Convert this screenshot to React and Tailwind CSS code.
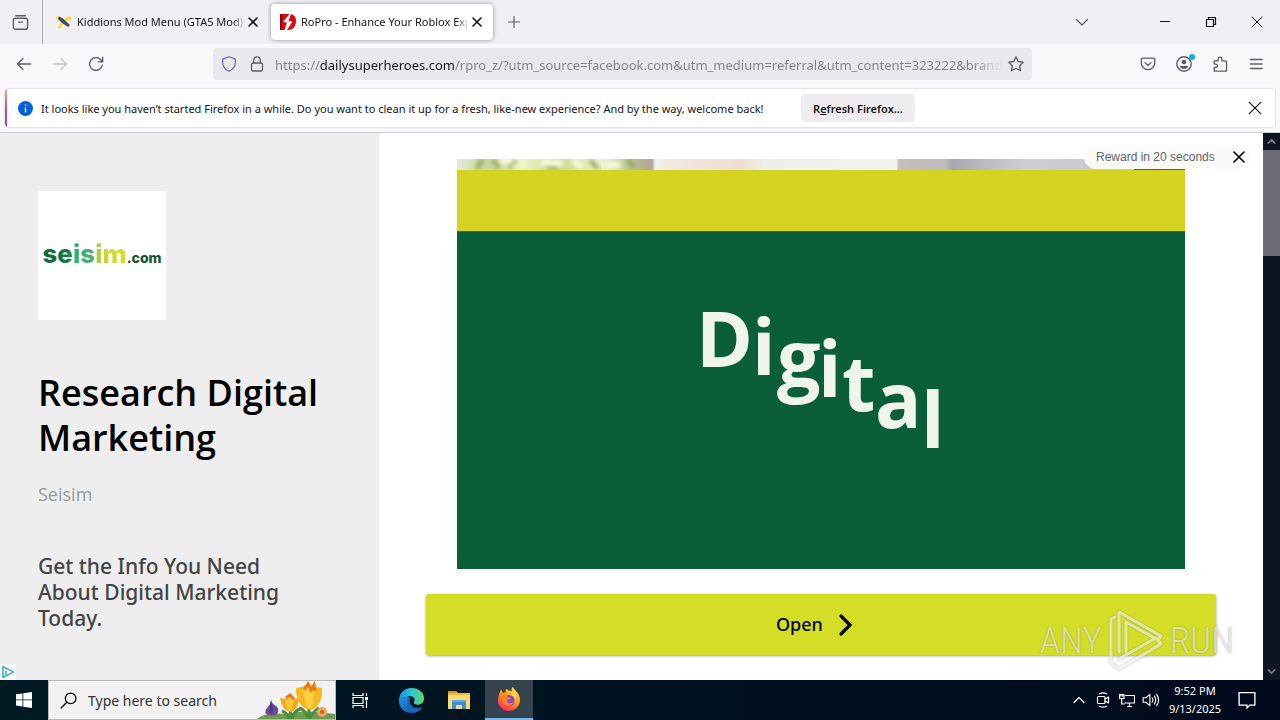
import React from "react";

const ui = "font-['Noto_Sans','Open_Sans',sans-serif]";

function Svg({ size = 16, children, className = "", ...rest }) {
  return (
    <svg
      width={size}
      height={size}
      viewBox="0 0 16 16"
      fill="none"
      stroke="currentColor"
      strokeWidth="1.2"
      strokeLinecap="round"
      strokeLinejoin="round"
      aria-hidden="true"
      className={`shrink-0 ${className}`}
      {...rest}
    >
      {children}
    </svg>
  );
}

function IconButton({ label, className = "", children }) {
  return (
    <button type="button" aria-label={label} className={`flex shrink-0 items-center justify-center ${className}`}>
      {children}
    </button>
  );
}

function Cross({ size = 16, inset = 3, width = 1.2 }) {
  const far = 16 - inset;
  return (
    <Svg size={size} strokeWidth={width}>
      <path d={`M${inset} ${inset}L${far} ${far}M${far} ${inset}L${inset} ${far}`} />
    </Svg>
  );
}

function Tab({ icon, title, active }) {
  return (
    <div
      role="tab"
      aria-selected={active}
      className={
        active
          ? "flex h-9 w-[222px] items-center gap-1 rounded-sm bg-white pl-[9px] pr-2 shadow-[0_0_4px_rgba(0,0,0,0.4)]"
          : "flex h-9 w-[222px] items-center gap-1 pl-[9px] pr-2"
      }
    >
      {icon}
      <span className="min-w-0 flex-1 overflow-hidden whitespace-nowrap pl-px pt-px [mask-image:linear-gradient(to_left,transparent,black_12px)]">
        {title}
      </span>
      <IconButton label={`Close ${title}`} className="-ml-1 h-4 w-4">
        <Cross inset={4} width={1.6} />
      </IconButton>
    </div>
  );
}

function KiddionsIcon() {
  return (
    <svg width="16" height="16" viewBox="0 0 16 16" aria-hidden="true" className="shrink-0">
      <path d="M0 3l3-1 3 2 1 2-3 1-3-1zM9 4l3-1.500 4 .5-1 3-3 .5-3 1zM4 9l3 1-2 4-2 1-1-2z" fill="#f2e23c" />
      <path d="M3 2.500l4 2 7 6.500-2 2-6-4-4-4z" fill="#444b59" />
    </svg>
  );
}

function RoProIcon() {
  return (
    <svg width="16" height="16" viewBox="0 0 16 16" aria-hidden="true" className="shrink-0">
      <path d="M0 1q0-1 1-1h8c5 0 7 3 7 7 0 5-3 9-8 9H1q-1 0-1-1z" fill="#d9070f" />
      <path d="M0 1v14q0 1 1 1h1V0H1Q0 0 0 1z" fill="#7f0b10" />
      <path d="M9.500 0L3 8l4 .5L4.500 16H7l5.500-8.500-4-.5L11 .2z" fill="#fff" />
    </svg>
  );
}

function TabStrip() {
  return (
    <div className="flex h-11 shrink-0 items-center bg-[#f0f0f4] text-[#15141a]">
      <IconButton label="Firefox View" className="h-full w-[43px] border-r border-[#a9a9ae] pr-[2px] text-[#5b5b66]">
        <Svg size={17} strokeWidth="1.3">
          <path d="M3.5 1.6h9" />
          <rect x="1.3" y="4" width="13.4" height="10.4" rx="2" />
          <path d="M6.2 7.6h3.6" />
        </Svg>
      </IconButton>
      <div role="tablist" className="flex gap-[2px] pl-1 text-[11px]">
        <Tab icon={<KiddionsIcon />} title="Kiddions Mod Menu (GTA5 Mod)" />
        <Tab icon={<RoProIcon />} title="RoPro - Enhance Your Roblox Experience" active />
      </div>
      <IconButton label="New tab" className="ml-[13px] h-4 w-4 text-[#5b5b66]">
        <Svg>
          <path d="M8 2.5v11M2.5 8h11" />
        </Svg>
      </IconButton>
      <IconButton label="List all tabs" className="ml-auto mr-11 h-8 w-8 text-[#5b5b66]">
        <Svg>
          <path d="M2.5 5.5L8 11l5.500-5.500" />
        </Svg>
      </IconButton>
      <IconButton label="Minimize" className="h-full w-[46px]">
        <Svg strokeWidth="1">
          <path d="M3 7.500h10" strokeLinecap="butt" />
        </Svg>
      </IconButton>
      <IconButton label="Restore" className="h-full w-[46px]">
        <Svg strokeWidth="1.200" strokeLinejoin="miter">
          <path d="M3.500 5.500h7v7h-7zM5.500 5.500v-2h7v7h-2" />
        </Svg>
      </IconButton>
      <IconButton label="Close" className="h-full w-[46px]">
        <Cross width={1} />
      </IconButton>
    </div>
  );
}

function NavBar() {
  return (
    <div className="flex h-11 shrink-0 items-center bg-[#f9f9fb] pl-4 pr-4 pb-1 text-[#5b5b66]">
      <div className="flex gap-5">
        <IconButton label="Back" className="h-4 w-4">
          <Svg strokeWidth="1.3">
            <path d="M14.500 8h-13M7 2.500L1.500 8 7 13.500" />
          </Svg>
        </IconButton>
        <IconButton label="Forward" className="h-4 w-4 text-[#c2c2c8]">
          <Svg strokeWidth="1.3">
            <path d="M1.500 8h13M9 2.500L14.500 8 9 13.500" />
          </Svg>
        </IconButton>
        <IconButton label="Reload" className="h-4 w-4">
          <Svg strokeWidth="1.3">
            <path d="M14.300 9A6.400 6.400 0 1 1 12.700 3.700L14.500 5.600M14.700 1.200v4.600h-4.600" />
          </Svg>
        </IconButton>
      </div>
      <div className="ml-[109px] flex h-8 min-w-0 flex-1 items-center rounded bg-[#e9e9ed] px-2">
        <IconButton label="Tracking protection" className="h-4 w-4 text-[#6562c9]">
          <Svg>
            <path d="M8 .8l6.300 2.300v3.500c0 4-2.500 7-6.300 8.700C4.200 13.600 1.700 10.600 1.700 6.600V3.100z" />
          </Svg>
        </IconButton>
        <IconButton label="Connection secure" className="ml-3 h-4 w-4">
          <Svg strokeWidth="1.3">
            <rect x="2.500" y="7" width="11" height="8" rx="1.500" />
            <path d="M4.800 7V4a3.200 3.200 0 0 1 6.400 0v3" />
          </Svg>
        </IconButton>
        <input
          aria-label="Address"
          readOnly
          value="https://dailysuperheroes.com/rpro_z/?utm_source=facebook.com&utm_medium=referral&utm_content=323222&brand=ropro"
          className="ml-[10px] mr-[6px] min-w-0 flex-1 bg-[linear-gradient(to_right,#808087_45px,#15141a_45px,#15141a_180px,#808087_180px,#808087_calc(100%-30px),transparent)] bg-clip-text pt-[3px] text-[13px] text-transparent outline-none"
        />
        <IconButton label="Bookmark this page" className="h-4 w-4">
          <Svg strokeWidth="1.3">
            <path d="M8 .9l2.200 4.600 5 .7-3.600 3.500.9 5L8 12.300l-4.500 2.400.9-5L.8 6.200l5-.7z" />
          </Svg>
        </IconButton>
      </div>
      <div className="ml-[108px] flex gap-5">
        <IconButton label="Save to Pocket" className="h-4 w-4">
          <Svg strokeWidth="1.300">
            <path d="M2.500 2.200h11a1.200 1.200 0 0 1 1.200 1.200V7a6.700 6.700 0 0 1-13.400 0V3.400a1.200 1.200 0 0 1 1.200-1.200zM5 6.600l3 2.900 3-2.900" />
          </Svg>
        </IconButton>
        <IconButton label="Account" className="relative h-4 w-4">
          <Svg strokeWidth="1.400">
            <circle cx="8" cy="8" r="7.200" />
            <circle cx="8" cy="6" r="2.300" fill="currentColor" stroke="none" />
            <path d="M3.700 10h8.600c-.6 2-2.200 3-4.300 3s-3.700-1-4.300-3z" fill="currentColor" stroke="none" />
          </Svg>
          <span className="absolute -right-[3px] -top-[2px] h-[6px] w-[6px] rounded-full bg-[#00b3e6]" />
        </IconButton>
        <IconButton label="Extensions" className="h-4 w-4">
          <Svg strokeWidth="1.300">
            <path d="M2.200 15.200v-3.700h1.600a1.700 1.700 0 0 0 0-3.400H2.200V4.800h4V3a1.800 1.800 0 0 1 3.600 0v1.800h3.400q1.300 0 1.300 1.300v9.100z" />
          </Svg>
        </IconButton>
        <IconButton label="Open application menu" className="h-4 w-4">
          <Svg strokeWidth="1.300">
            <path d="M2.500 3.500h11.500M2.500 8h11.500M2.500 12.500h11.500" />
          </Svg>
        </IconButton>
      </div>
    </div>
  );
}

function Notification() {
  return (
    <div className="shrink-0 border-b border-[#cfcfd3] bg-[#f9f9fb] px-[5px] pb-[5px] pt-px">
      <div className="flex h-[38px] overflow-hidden rounded-sm bg-white shadow-[0_0_2px_rgba(0,0,0,0.3)]">
        <div className="w-[2px] bg-linear-to-b from-[#f9a35a] via-[#c9499b] to-[#8848c9]" />
        <div className="flex flex-1 items-center pl-[11px] pr-3 text-[#15141a]">
          <svg width="15" height="15" viewBox="0 0 15 15" aria-hidden="true" className="shrink-0">
            <circle cx="7.500" cy="7.500" r="7.500" fill="#0060df" />
            <path d="M7.500 6.500v5M7.500 3.500v1.400" stroke="#fff" strokeWidth="1.300" />
          </svg>
          <p className="ml-2 min-w-[744px] pt-[2px] whitespace-nowrap text-[11px]">
            It looks like you haven’t started Firefox in a while. Do you want to clean it up for a fresh, like-new
            experience? And by the way, welcome back!
          </p>
          <button type="button" className="ml-4 h-7 w-[114px] rounded-sm bg-[#eeeef0] pt-[2px] text-[11px] font-semibold whitespace-nowrap">
            R<span className="underline">e</span>fresh Firefox...
          </button>
          <IconButton label="Close notification" className="ml-auto h-4 w-4">
            <Cross inset={2.3} width={1.2} />
          </IconButton>
        </div>
      </div>
    </div>
  );
}

function AdArtwork() {
  const letters = [
    ["D", 696, 367],
    ["i", 752, 375],
    ["g", 777, 386],
    ["i", 818, 397],
    ["t", 842, 411],
    ["a", 875, 428],
    ["l", 921, 448],
  ];
  return (
    <svg viewBox="457 159 728 410" className="block w-full" role="img" aria-label="Digital">
      <defs>
        <linearGradient id="photo">
          <stop offset="0" stopColor="#e6eadb" />
          <stop offset=".04" stopColor="#c9d59a" />
          <stop offset=".09" stopColor="#eef4c9" />
          <stop offset=".14" stopColor="#cbd98b" />
          <stop offset=".2" stopColor="#edf2d2" />
          <stop offset=".24" stopColor="#b4c08c" />
          <stop offset=".268" stopColor="#b4a59a" />
          <stop offset=".272" stopColor="#f0efee" />
          <stop offset=".3" stopColor="#f3e7df" />
          <stop offset=".39" stopColor="#f1ddd2" />
          <stop offset=".42" stopColor="#efeeeb" />
          <stop offset=".604" stopColor="#f2f2f1" />
          <stop offset=".606" stopColor="#c5bfbe" />
          <stop offset=".67" stopColor="#bebbba" />
          <stop offset=".68" stopColor="#a8a8ae" />
          <stop offset=".78" stopColor="#cfcfd3" />
          <stop offset="1" stopColor="#c3c3c9" />
        </linearGradient>
        <filter id="soft">
          <feGaussianBlur stdDeviation="2" />
        </filter>
      </defs>
      <rect x="457" y="159" width="728" height="12" fill="url(#photo)" />
      <g filter="url(#soft)">
        <path d="M482 159l-5 10M492 160l8 8M515 160l-7 8M545 166l12 3M590 160l8 9M628 159l5 8" stroke="#8fa058" strokeWidth="4" />
        <path d="M500 161h12M541 163h22M573 160l9 7M606 165h14" stroke="#fafde2" strokeWidth="6" />
      </g>
      <rect x="457" y="170" width="728" height="61" fill="#d4d321" />
      <path d="M1134 169.500h51" stroke="#55651c" />
      <rect x="457" y="231" width="728" height="338" fill="#0a5f39" />
      <path d="M457 231.500h728" stroke="#3b6b22" />
      <g fill="#f0f5eb" fontFamily="'Open Sans', sans-serif" fontWeight="700" fontSize="77">
        {letters.map(([ch, x, y]) => (
          <text key={x} x={x} y={y}>
            {ch}
          </text>
        ))}
      </g>
    </svg>
  );
}

function Watermark() {
  return (
    <div
      aria-hidden="true"
      className="pointer-events-none absolute bottom-2 right-[29px] flex items-center gap-[6px] font-['Liberation_Sans_Narrow','Roboto_Condensed','Roboto',sans-serif] text-[37px] leading-none font-light text-white/60 [text-shadow:0_0_2px_rgba(90,90,90,0.5)]"
    >
      <span>ANY</span>
      <svg width="56" height="64" viewBox="0 0 56 64" fill="none" strokeLinejoin="round" strokeLinecap="round">
        <g stroke="#777" strokeOpacity=".2" strokeWidth="5">
          <path d="M11 44V4l42 24-3 4-32-18v30M7 9L3 11v44l8 6 42-25-5-6-37 21" />
        </g>
        <g stroke="#fff" strokeOpacity=".55" strokeWidth="3">
          <path d="M11 44V4l42 24-3 4-32-18v30M7 9L3 11v44l8 6 42-25-5-6-37 21" />
        </g>
      </svg>
      <span>RUN</span>
    </div>
  );
}

function Page() {
  return (
    <main className="flex min-h-0 flex-1 bg-white font-['Open_Sans',sans-serif]">
      <div className="relative flex min-w-0 flex-1">
        <aside className="relative w-[30%] shrink-0 bg-[#eee] px-[38px] pt-[58px]">
          <div className="flex h-[129px] w-32 items-center justify-center bg-white pb-1">
            <p className="flex items-baseline font-['Inter',sans-serif] leading-none font-extrabold">
              <span className="bg-[linear-gradient(to_right,#11693a,#15793f_30%,#2fae74_38%,#47b06a_58%,#a8c94b_64%,#c9d832_75%,#d8df20)] bg-clip-text text-[26px] text-transparent">
                seisim
              </span>
              <span className="text-[14px] text-[#13552f]">.com</span>
            </p>
          </div>
          <h1 className="mt-[50px] text-[36px] leading-[45px] font-semibold text-black">Research Digital Marketing</h1>
          <p className="mt-[21px] text-[18px] leading-[26px] text-[#999]">Seisim</p>
          <p className="mt-[46px] pr-5 font-['Noto_Sans',sans-serif] text-[21px] leading-[26px] font-medium text-[#444]">
            Get the Info You Need About Digital Marketing Today.
          </p>
          <a href="#adchoices" aria-label="AdChoices" className="absolute bottom-0 left-0 bg-[#fafafa]">
            <svg width="16" height="16" viewBox="0 0 16 16" fill="none" stroke="#1fa5c4" strokeWidth="1.400">
              <path d="M3 2.500l10.500 5.500L3 13.500z" strokeLinejoin="round" />
              <path d="M6 7v4M6 4.500v1.300" />
            </svg>
          </a>
        </aside>
        <section className="flex min-w-0 flex-1 flex-col px-[47px] pt-[26px]">
          <div className="px-[31px]">
            <AdArtwork />
          </div>
          <button
            type="button"
            className="mt-[25px] flex h-[61px] items-center justify-center gap-[13px] rounded-[3px] bg-[#d5de27] pr-[10px] font-['Noto_Sans',sans-serif] text-[18px] font-medium text-black shadow-[0_1px_3px_rgba(0,0,0,0.4)]"
          >
            Open
            <svg width="20" height="24" viewBox="0 0 20 24" fill="none" stroke="#000" strokeWidth="3.200" strokeLinecap="round" aria-hidden="true">
              <path d="M5 3l9 9-9 9" />
            </svg>
          </button>
        </section>
        <div className="absolute right-3 top-3 flex h-6 w-[167px] items-center justify-between rounded-full bg-[#fafafa] pl-3 pr-1 font-['Liberation_Sans',sans-serif] text-[12px] text-[#666]">
          Reward in 20 seconds
          <IconButton label="Close ad" className="h-4 w-4 text-black">
            <Cross inset={3} width={1.600} />
          </IconButton>
        </div>
        <Watermark />
      </div>
      <div className="flex w-[17px] shrink-0 flex-col items-center bg-[#0f1520] text-[#7b7d86]">
        <div className="flex h-[17px] items-center">
          <Svg size={13} strokeWidth="2">
            <path d="M4 10l4-4 4 4" />
          </Svg>
        </div>
        <div className="h-[106px] w-full bg-[#6c6d76]" />
        <div className="mt-auto flex h-[17px] items-center">
          <Svg size={13} strokeWidth="2">
            <path d="M4 6l4 4 4-4" />
          </Svg>
        </div>
      </div>
    </main>
  );
}

function Flowers() {
  return (
    <svg width="80" height="38" viewBox="0 0 80 38" aria-hidden="true" className="shrink-0 self-end">
      <path d="M2 38q10-8 26-5 22-5 52 0v5z" fill="#6f9a56" />
      <path d="M16 18q0 5-4 9-4 5 1 7 8 2 10-3 1-4-2-6-5-3-5-7z" fill="#6b4c9c" />
      <path d="M16 20q-2 7 0 14 4-5 0-14z" fill="#4f3580" />
      <path d="M35 28l1 10M54 25v13M34 38q-3-7-7-8M37 38q2-8 8-10M53 38q-2-9-9-11M55 38q3-8 9-11" stroke="#4c8d3c" strokeWidth="3" fill="none" />
      <path d="M25 17l5 1 5-4 5 4 4-1q-1 13-9 14-8-2-10-14z" fill="#f6a81c" />
      <path d="M35 15l4 4-3 11h-3l-3-11z" fill="#ffc933" />
      <path d="M41 7l6-1 7-4 6 4 7 1q1 19-12 22Q41 26 41 7z" fill="#f8b720" />
      <path d="M54 2l6 7-3 18h-5L47 8z" fill="#ffcf3c" />
      <path d="M49 9l4-6 3 6 3-5 1 6M31 17l4-3 4 4" stroke="#e77a1b" strokeWidth="3" fill="none" />
      <circle cx="67" cy="31" r="5" fill="#f0a35c" />
      <circle cx="67" cy="31" r="2" fill="#c7642a" />
    </svg>
  );
}

function EdgeIcon() {
  return (
    <svg width="25" height="25" viewBox="0 0 24 24" aria-hidden="true">
      <defs>
        <linearGradient id="edgeTop" x1="0" y1="0.500" x2="1" y2="0.500">
          <stop offset="0" stopColor="#1b8fdb" />
          <stop offset=".5" stopColor="#2fc3d6" />
          <stop offset="1" stopColor="#5fdc5b" />
        </linearGradient>
        <linearGradient id="edgeBase" x1="0" y1="0" x2="1" y2="1">
          <stop offset="0" stopColor="#1f95e6" />
          <stop offset="1" stopColor="#0c4f9e" />
        </linearGradient>
      </defs>
      <path d="M0 12C0 5 5 0 12 0s12 4.500 12 10c0 4-3 6-6 6-3.500 0-4.500-1.500-3.500-3 1.500-2.500-.5-5-3.500-5C5 8 1 12 1 15z" fill="url(#edgeTop)" />
      <path d="M0 12c0 7 5 12 12 12 4.500 0 8-2 10.500-5.500-3 1.500-6.500 1.500-9-.3C9.500 16 8.800 12 11 9.700 6 7 0 9 0 12z" fill="url(#edgeBase)" />
      <path d="M8 12c-1.500 6 1.500 10.500 6.500 11.700 3.500-.8 6.200-2.700 8-5.200-3 1.500-6.500 1.500-9-.3C10.500 16.500 9 12 11 9.700 9.500 9.500 8.400 10.600 8 12z" fill="#1767b4" />
    </svg>
  );
}

function FolderIcon() {
  return (
    <svg width="22" height="20" viewBox="0 0 22 20" aria-hidden="true">
      <path d="M0 1h8l2 2h12v16H0z" fill="#f5b82e" />
      <path d="M0 1h8l2 2H0z" fill="#e08b1b" />
      <path d="M0 5h22v14H0z" fill="#fcd975" />
      <path d="M4 19v-9h14v9h-4v-4H8v4z" fill="#3c8fd0" />
      <path d="M4 10h14v2H4z" fill="#5aacdf" />
    </svg>
  );
}

function FirefoxIcon() {
  return (
    <svg width="24" height="24" viewBox="0 0 24 24" aria-hidden="true">
      <defs>
        <linearGradient id="fox" x1=".8" y1="0" x2=".2" y2="1">
          <stop offset="0" stopColor="#ffe94a" />
          <stop offset=".45" stopColor="#ff9a1f" />
          <stop offset="1" stopColor="#f5206b" />
        </linearGradient>
      </defs>
      <path d="M3 5l1-3 2 4 3-1c-1-2 0-3 1-3 1 2 4 2 5 2-1-2 0-4 1-4 1 3 7 6 7 13 0 6-5 11-11.500 11S1 19 1 13c0-3 1-6 2-8z" fill="url(#fox)" />
      <circle cx="12" cy="13.500" r="5.500" fill="#8144e0" />
      <path d="M4 9c3-2 6-1 7 1l3 1c0 2-4 1-4 3 0 3 5 3 7 0-1 6-10 6-12 1z" fill="#ff801f" />
      <path d="M16 4c3 3 4 7 2 11 1-5-2-6-4-8z" fill="#ffdf3f" />
    </svg>
  );
}

function Taskbar() {
  return (
    <footer className="flex h-10 shrink-0 items-stretch bg-linear-to-r from-[#001a24] to-[#010a1c] text-white">
      <IconButton label="Start" className="w-12">
        <svg width="16" height="16" viewBox="0 0 16 16" fill="#fff" aria-hidden="true">
          <path d="M0 2.300l6.500-.9v6.100H0zM7.300 1.300L16 0v7.500H7.300zM0 8.300h6.500v6.200L0 13.600zM7.300 8.300H16V16l-8.700-1.300z" />
        </svg>
      </IconButton>
      <label className="flex w-72 items-center border border-[#b8bbbd] bg-[#f2f2f2] pl-[11px] text-black">
        <Svg size={17}>
          <circle cx="10" cy="6" r="5" />
          <path d="M6.400 9.600L1 15" />
        </Svg>
        <input
          aria-label="Type here to search"
          placeholder="Type here to search"
          className="ml-[11px] min-w-0 flex-1 bg-transparent text-[14px] outline-none placeholder:text-[#333]"
        />
        <Flowers />
      </label>
      <IconButton label="Task view" className="w-12">
        <svg width="17" height="17" viewBox="0 0 17 17" fill="none" stroke="#fff" strokeWidth="1.200" aria-hidden="true">
          <path d="M1 1v2.500h10V1M1 16v-2.500h10V16M1 5.500h10v6H1zM14.500 1v3M14.500 8.500V16" />
          <path d="M13 5h3v3h-3z" fill="#fff" stroke="none" />
        </svg>
      </IconButton>
      <IconButton label="Microsoft Edge" className="ml-[3px] w-12">
        <EdgeIcon />
      </IconButton>
      <IconButton label="File Explorer" className="w-12">
        <FolderIcon />
      </IconButton>
      <IconButton label="Firefox" className="ml-[2px] w-12 border-b-2 border-[#76b9ed] bg-[#34434d]">
        <FirefoxIcon />
      </IconButton>
      <div className="ml-auto flex items-center gap-2 pr-[9px]">
        <IconButton label="Show hidden icons" className="h-4 w-4">
          <Svg>
            <path d="M3 10.500l5-5 5 5" />
          </Svg>
        </IconButton>
        <IconButton label="Meet Now" className="h-4 w-4">
          <Svg>
            <path d="M4.500 1.800q3.500-2 7 0M4.500 14.200q3.500 2 7 0" />
            <rect x="2.500" y="4.500" width="7.500" height="7" rx="1" />
            <path d="M10 7l3.500-2v6L10 9" />
          </Svg>
        </IconButton>
        <IconButton label="Network" className="h-4 w-4">
          <Svg strokeLinejoin="miter" strokeLinecap="butt">
            <path d="M6 3.500h9.500v7.500H5.500M8 14.500h5M10.500 11v3.500M.5 2.500h4.500v4H.5zM2.700 6.500V12h3M2 2.500v2M3.500 2.500v2" />
          </Svg>
        </IconButton>
        <IconButton label="Volume" className="h-4 w-4">
          <Svg size={18} strokeWidth="1">
            <path d="M1 6h2.500L7 3v10L3.500 10H1zM9 6q1.500 2 0 4M11 4.500q2.500 3.500 0 7M13 3q3.500 5 0 10" />
          </Svg>
        </IconButton>
        <div className="w-14 text-center text-[11px] leading-[18px] whitespace-nowrap">
          <div>9:52 PM</div>
          <div>9/13/2025</div>
        </div>
        <IconButton label="Notifications" className="ml-2 mr-4 h-4 w-4">
          <Svg size={18} strokeLinejoin="miter">
            <path d="M1 1.500h14v11h-4.500L8 15v-2.500H1z" />
          </Svg>
        </IconButton>
      </div>
    </footer>
  );
}

export default function App() {
  return (
    <div className={`flex h-screen flex-col overflow-hidden ${ui}`}>
      <TabStrip />
      <NavBar />
      <Notification />
      <Page />
      <Taskbar />
    </div>
  );
}
